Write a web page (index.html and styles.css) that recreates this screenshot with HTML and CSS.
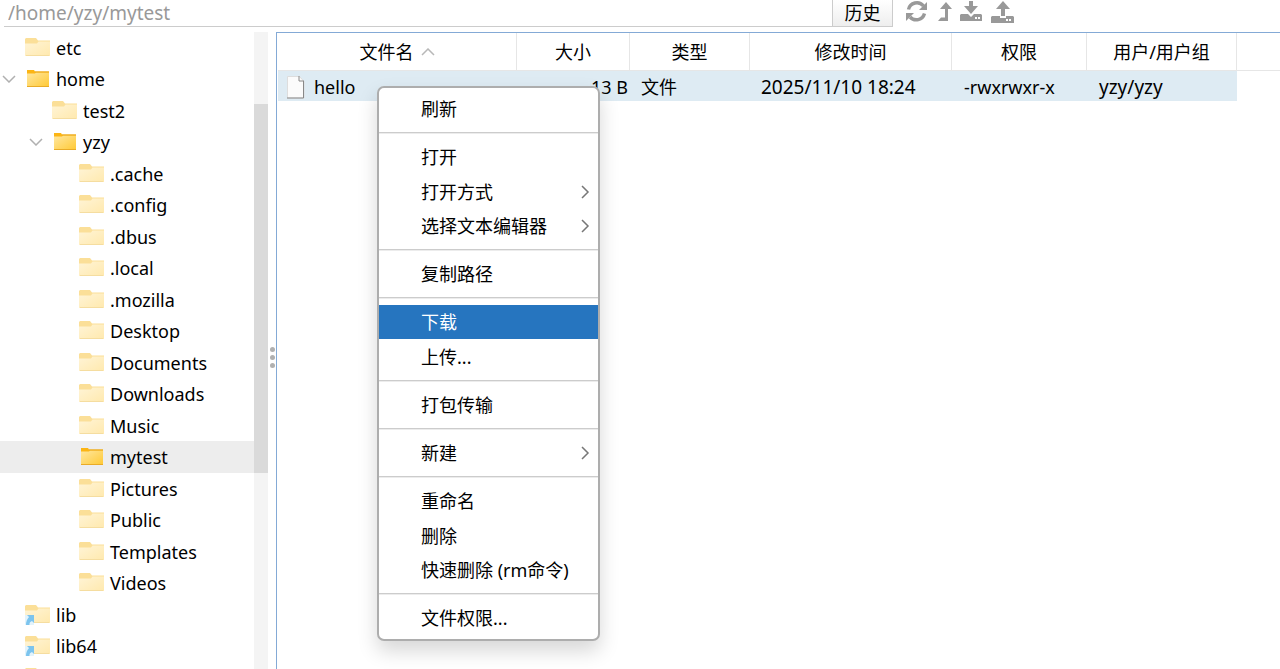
FILE: index.html
```
<!DOCTYPE html>
<html lang="zh-CN">
<head>
<meta charset="utf-8">
<title>文件管理</title>
<link rel="stylesheet" href="styles.css">
</head>
<body>
<svg class="defs" aria-hidden="true">
  <defs>
    <linearGradient id="pale" x1="0" y1="0" x2="1" y2="1"><stop offset="0" stop-color="#fff4d6"/><stop offset="1" stop-color="#ffe9ae"/></linearGradient>
    <linearGradient id="gold" x1="0" y1="0" x2="1" y2="1"><stop offset="0" stop-color="#ffe7a0"/><stop offset="1" stop-color="#ffc934"/></linearGradient>
    <symbol id="closed" viewBox="0 0 26 20">
      <path d="M1 0h10l2 2.500h12V6H0V1z" fill="#fbdf98"/>
      <path d="M0 5.500h12l1.500-2H25V18H0z" fill="url(#pale)"/>
      <path d="M1 17.500h23" stroke="#f5dda0"/>
    </symbol>
    <symbol id="open" viewBox="0 0 26 20">
      <path d="M2 1h7l1 1.500h14V5H2z" fill="#fcb514"/>
      <path d="M2 4.500h8l1-1h13V18H2z" fill="url(#gold)"/>
      <path d="M2 17.500h22M10 3h14" stroke="#e9ab27"/>
    </symbol>
    <symbol id="link" viewBox="0 0 26 20">
      <use href="#closed"/>
      <path d="M0 10h9v10H0z" fill="#e3f3fb"/>
      <path d="M2 10h7v8l-2-2q-3 1-2.500 4H1q0-5 3-8z" fill="#7cc4ee"/>
    </symbol>
    <symbol id="down" viewBox="0 0 14 8"><path d="M1 1l6 6 6-6" fill="none" stroke="#b0b0b0" stroke-width="1.500"/></symbol>
    <symbol id="right" viewBox="0 0 10 14"><path d="M2 1l6 6-6 6" fill="none" stroke="#777" stroke-width="1.500"/></symbol>
  </defs>
</svg>
<div class="app">
  <header class="toolbar">
    <div class="address">
      <input class="path" type="text" aria-label="路径" value="/home/yzy/mytest">
      <button class="history" type="button">历史</button>
    </div>
    <div class="tools">
      <button type="button" aria-label="刷新"><svg width="22" height="23" viewBox="0 0 22 23"><path d="M2.500 9.500A8.500 8.500 0 0 1 17.500 6M18.500 13.500A8.500 8.500 0 0 1 4 17" fill="none" stroke="#999" stroke-width="3.400"/><path d="M21 2v8h-8zM0 21v-8h8z" fill="#999"/></svg></button>
      <button type="button" aria-label="上级目录"><svg width="14" height="22" viewBox="0 0 14 22"><path d="M9 1l6 7h-4v12H1l3-3.500h4V8H3z" fill="#999"/></svg></button>
      <button type="button" aria-label="下载"><svg width="22" height="22" viewBox="0 0 22 22"><path d="M9 0h4v5h5l-7 8-7-8h5zM1 13h7l3 3 3-3h7l1 1v6H0v-6z" fill="#999"/><path d="M15 17h2M18 17h2" stroke="#fff" stroke-width="2"/></svg></button>
      <button type="button" aria-label="上传"><svg width="23" height="22" viewBox="0 0 23 22"><path d="M12 0l7 8h-5v7h-4V8H5zM1 15h8v2h6v-2h7l1 1v6H0v-6z" fill="#999"/><path d="M15 19h2M18 19h2" stroke="#fff" stroke-width="2"/></svg></button>
    </div>
  </header>
  <main class="body">
    <nav class="sidebar" aria-label="目录">
      <ul class="tree">
        <li class="node"><span class="toggle"></span><svg class="folder"><use href="#closed"/></svg>etc</li>
        <li class="node"><svg class="toggle"><use href="#down"/></svg><svg class="folder"><use href="#open"/></svg>home</li>
        <li class="node l1"><span class="toggle"></span><svg class="folder"><use href="#closed"/></svg>test2</li>
        <li class="node l1"><svg class="toggle"><use href="#down"/></svg><svg class="folder"><use href="#open"/></svg>yzy</li>
        <li class="node l2"><span class="toggle"></span><svg class="folder"><use href="#closed"/></svg>.cache</li>
        <li class="node l2"><span class="toggle"></span><svg class="folder"><use href="#closed"/></svg>.config</li>
        <li class="node l2"><span class="toggle"></span><svg class="folder"><use href="#closed"/></svg>.dbus</li>
        <li class="node l2"><span class="toggle"></span><svg class="folder"><use href="#closed"/></svg>.local</li>
        <li class="node l2"><span class="toggle"></span><svg class="folder"><use href="#closed"/></svg>.mozilla</li>
        <li class="node l2"><span class="toggle"></span><svg class="folder"><use href="#closed"/></svg>Desktop</li>
        <li class="node l2"><span class="toggle"></span><svg class="folder"><use href="#closed"/></svg>Documents</li>
        <li class="node l2"><span class="toggle"></span><svg class="folder"><use href="#closed"/></svg>Downloads</li>
        <li class="node l2"><span class="toggle"></span><svg class="folder"><use href="#closed"/></svg>Music</li>
        <li class="node l2 selected"><span class="toggle"></span><svg class="folder"><use href="#open"/></svg>mytest</li>
        <li class="node l2"><span class="toggle"></span><svg class="folder"><use href="#closed"/></svg>Pictures</li>
        <li class="node l2"><span class="toggle"></span><svg class="folder"><use href="#closed"/></svg>Public</li>
        <li class="node l2"><span class="toggle"></span><svg class="folder"><use href="#closed"/></svg>Templates</li>
        <li class="node l2"><span class="toggle"></span><svg class="folder"><use href="#closed"/></svg>Videos</li>
        <li class="node"><span class="toggle"></span><svg class="folder"><use href="#link"/></svg>lib</li>
        <li class="node"><span class="toggle"></span><svg class="folder"><use href="#link"/></svg>lib64</li>
        <li class="node"><span class="toggle"></span><svg class="folder"><use href="#closed"/></svg></li>
      </ul>
      <div class="scrollbar"><div class="thumb"></div></div>
    </nav>
    <div class="splitter"><i></i><i></i><i></i></div>
    <section class="files">
      <table class="list">
        <colgroup><col class="c-name"><col class="c-size"><col class="c-type"><col class="c-time"><col class="c-perm"><col class="c-user"><col></colgroup>
        <thead>
          <tr><th>文件名<svg class="sort" viewBox="0 0 14 8"><path d="M1 7l6-6 6 6" fill="none" stroke="#b8b8b8" stroke-width="1.500"/></svg></th><th>大小</th><th>类型</th><th>修改时间</th><th>权限</th><th>用户/用户组</th><th></th></tr>
        </thead>
        <tbody>
          <tr>
            <td class="name"><div class="file"><svg width="18" height="23" viewBox="0 0 18 23"><path d="M.5.500h12l4.500 5V22H.5z" fill="#fbfbfb" stroke="#ddd"/><path d="M12 0v5h5M16.500 5v17H0" fill="none" stroke="#888"/></svg>hello</div></td>
            <td class="size">13 B</td><td>文件</td><td class="wide">2025/11/10 18:24</td><td class="mode">-rwxrwxr-x</td><td class="wide owner">yzy/yzy</td><td class="rest"></td>
          </tr>
        </tbody>
      </table>
    </section>
  </main>
</div>
<div class="menu" role="menu">
  <div class="group"><button class="item" role="menuitem">刷新</button></div>
  <div class="group">
    <button class="item" role="menuitem">打开</button>
    <button class="item" role="menuitem">打开方式<svg class="more"><use href="#right"/></svg></button>
    <button class="item" role="menuitem">选择文本编辑器<svg class="more"><use href="#right"/></svg></button>
  </div>
  <div class="group"><button class="item" role="menuitem">复制路径</button></div>
  <div class="group">
    <button class="item active" role="menuitem">下载</button>
    <button class="item" role="menuitem">上传...</button>
  </div>
  <div class="group"><button class="item" role="menuitem">打包传输</button></div>
  <div class="group"><button class="item" role="menuitem">新建<svg class="more"><use href="#right"/></svg></button></div>
  <div class="group">
    <button class="item" role="menuitem">重命名</button>
    <button class="item" role="menuitem">删除</button>
    <button class="item" role="menuitem">快速删除 (rm命令)</button>
  </div>
  <div class="group"><button class="item" role="menuitem">文件权限...</button></div>
</div>
</body>
</html>
```
FILE: styles.css
```
* { box-sizing: border-box; }
body {
  margin: 0;
  overflow: hidden;
  background: #fff;
  color: #000;
  font: 18px/24px "Noto Sans", "Noto Sans CJK SC", sans-serif;
}
button, input { font: inherit; color: inherit; border: 0; background: none; padding: 0; }
.defs { position: absolute; width: 0; height: 0; }
.app { display: flex; flex-direction: column; height: 100vh; }

.toolbar { display: flex; height: 32px; flex: none; align-items: flex-start; padding-left: 4px; }
.address { display: flex; flex: 0 1 889px; height: 27px; border-bottom: 1px solid #ccc; }
.path { flex: 1; min-width: 0; padding-left: 4px; color: #999; font-size: 19px; outline: 0; }
.history {
  width: 61px;
  border: 1px solid #ccc;
  border-top: 0;
  border-bottom: 0;
  background: linear-gradient(#fff, #eee);
}
.tools { display: flex; gap: 9px; padding-left: 13px; }
.tools button, .tools svg { display: block; overflow: visible; }

.body { display: flex; flex: 1; min-height: 0; }
.sidebar { display: flex; flex: 0 0 268px; overflow: hidden; }
.tree { flex: 1; margin: 0; padding: 0; list-style: none; }
.node { display: flex; align-items: center; height: 31px; padding-left: 2px; white-space: nowrap; }
.node:nth-child(even) { height: 32px; }
.node.l1 { padding-left: 29px; }
.node.l2 { padding-left: 56px; }
.selected { background: #ededed; }
.toggle { width: 14px; height: 8px; margin-right: 9px; }
.folder { width: 26px; height: 20px; margin-right: 5px; }
.scrollbar { width: 14px; padding-top: 72px; background: #f4f4f4; }
.thumb { height: 369px; background: #dadada; }
.splitter { display: flex; flex-direction: column; justify-content: center; align-items: center; gap: 3px; width: 8px; padding-top: 14px; }
.splitter i { width: 5px; height: 5px; border-radius: 50%; background: #b0b0b0; }

.files { flex: 1; min-width: 0; border: solid #84aad6; border-width: 1px 0 0 1px; padding-left: 1px; }
.list { width: 100%; table-layout: fixed; border-collapse: separate; border-spacing: 0; }
.c-name { width: 239px; }
.c-size { width: 113px; }
.c-type { width: 120px; }
.c-time { width: 202px; }
.c-perm { width: 135px; }
.c-user { width: 150px; }
th { height: 38px; padding: 0; font-weight: 400; border: solid #e6e6e6; border-width: 0 1px 1px 0; }
th:last-child { border-right: 0; }
.sort { width: 14px; height: 8px; margin-left: 7px; vertical-align: 3px; }
td { height: 30px; padding: 2px 0 0 11px; line-height: 28px; background: #deebf3; white-space: nowrap; }
.name { padding-left: 9px; }
.file { display: flex; align-items: center; gap: 9px; }
.size { padding-right: 2px; text-align: right; }
.wide { font-size: 19px; }
.mode, .owner { padding-left: 12px; }
.rest { background: none; }

.menu {
  position: absolute;
  left: 377px;
  top: 86px;
  width: 223px;
  padding: 4px 0;
  border: 2px solid #adadad;
  border-radius: 7px;
  background: #fff;
  box-shadow: 0 10px 20px rgba(0, 0, 0, .16);
}
.group + .group { margin-top: 6px; padding-top: 7px; border-top: 1px solid #ccc; box-shadow: inset 0 1px #ececec; }
.item { display: flex; align-items: center; justify-content: space-between; width: 100%; height: 34px; padding: 0 8px 0 42px; text-align: left; }
.item:nth-child(2) { margin-top: 1px; }
.active { background: #2675bf; color: #fff; }
.more { width: 10px; height: 14px; }
```
